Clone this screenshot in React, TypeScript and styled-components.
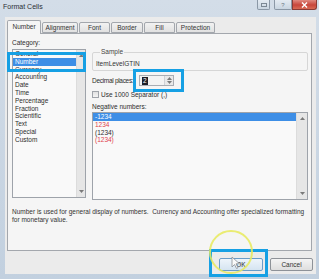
import React from 'react';
import styled, { createGlobalStyle } from 'styled-components';

const GlobalStyle = createGlobalStyle`
  html, body {
    margin: 0;
    padding: 0;
  }
  body {
    width: 319px;
    height: 279px;
    overflow: hidden;
    background: #c4d2e1;
    font-family: "Liberation Sans", Arial, sans-serif;
    color: #2d2d2d;
  }
`;

const categories = [
  'General',
  'Number',
  'Currency',
  'Accounting',
  'Date',
  'Time',
  'Percentage',
  'Fraction',
  'Scientific',
  'Text',
  'Special',
  'Custom',
];

const negatives = [
  { label: '-1234', red: false },
  { label: '1234', red: true },
  { label: '(1234)', red: false },
  { label: '(1234)', red: true },
];

const tabs = ['Number', 'Alignment', 'Font', 'Border', 'Fill', 'Protection'];
const tabWidths = [34, 36, 31, 32, 31, 39];

const Arrow = ({ up }: { up?: boolean }) => (
  <svg width="5" height="3" viewBox="0 0 5 3">
    <path d={up ? 'M0 3L2.5 0L5 3Z' : 'M0 0L2.5 3L5 0Z'} fill="#7a7a7a" />
  </svg>
);

const App = () => {
  return (
    <Window>
      <GlobalStyle />
      <TitleBar>
        <Title>Format Cells</Title>
        <Controls>
          <CtrlButton $w={13}>
            <svg width="6" height="4" viewBox="0 0 6 4">
              <rect x="0.5" y="0.5" width="5" height="3" fill="none" stroke="#7c8894" />
            </svg>
          </CtrlButton>
          <CtrlButton $w={18}>?</CtrlButton>
          <CloseButton>
            <svg width="7" height="6" viewBox="0 0 7 6">
              <path d="M1 0.5L6 5.5M6 0.5L1 5.5" stroke="#fff" strokeWidth="1.4" />
            </svg>
          </CloseButton>
        </Controls>
      </TitleBar>

      <Client>
        <TabStrip>
          {tabs.map((t, i) => (
            <Tab key={t} $active={i === 0} $w={tabWidths[i]}>
              {t}
            </Tab>
          ))}
        </TabStrip>

        <TabPanel>
          <Columns>
            <LeftCol>
              <Label>Category:</Label>
              <ListBox $h={149}>
                <ListItems>
                  {categories.map((c) => (
                    <Item key={c} $selected={c === 'Number'}>
                      {c}
                    </Item>
                  ))}
                </ListItems>
                <ScrollBar>
                  <ScrollArrow><Arrow up /></ScrollArrow>
                  <ScrollArrow><Arrow /></ScrollArrow>
                </ScrollBar>
              </ListBox>
            </LeftCol>

            <RightCol>
              <GroupBox>
                <Legend>Sample</Legend>
                <SampleText>ItemLevelGTIN</SampleText>
              </GroupBox>

              <DecimalRow>
                <DecimalLabel>Decimal places:</DecimalLabel>
                <Spinner>
                  <SpinValue>
                    <Selected>2</Selected>
                  </SpinValue>
                  <SpinButtons>
                    <SpinBtn><Arrow up /></SpinBtn>
                    <SpinBtn><Arrow /></SpinBtn>
                  </SpinButtons>
                </Spinner>
              </DecimalRow>

              <CheckRow>
                <CheckBox />
                <span>Use 1000 Separator (,)</span>
              </CheckRow>

              <NegLabel>Negative numbers:</NegLabel>
              <ListBox $h={88}>
                <ListItems>
                  {negatives.map((n, i) => (
                    <Item key={i} $selected={i === 0} $red={n.red}>
                      {n.label}
                    </Item>
                  ))}
                </ListItems>
                <ScrollBar $wide>
                  <ScrollArrow><Arrow up /></ScrollArrow>
                  <ScrollArrow><Arrow /></ScrollArrow>
                </ScrollBar>
              </ListBox>
            </RightCol>
          </Columns>

          <Description>
            Number is used for general display of numbers.&nbsp; Currency and Accounting offer specialized formatting
            <br />
            for monetary value.
          </Description>
        </TabPanel>

        <ButtonRow>
          <DialogButton $default>OK</DialogButton>
          <DialogButton>Cancel</DialogButton>
        </ButtonRow>
      </Client>

      <Highlight $x={7} $y={52} $w={79} $h={20} />
      <Highlight $x={133} $y={69} $w={51} $h={23} />
      <Highlight $x={209} $y={249} $w={59} $h={28} />

      <CursorLayer width="319" height="279" viewBox="0 0 319 279">
        <circle cx="231" cy="252" r="21" fill="none" stroke="#e8ea5a" strokeWidth="2" opacity="0.85" />
        <path
          d="M232 257L232 267L234.5 264.5L236.5 268.5L238 267.8L236 263.8L239.5 263.8Z"
          fill="#fafafa"
          stroke="#8a8f96"
          strokeWidth="0.8"
        />
      </CursorLayer>
    </Window>
  );
};

export default App;

const Window = styled.div`
  position: relative;
  width: 319px;
  height: 279px;
  display: flex;
  flex-direction: column;
  background: linear-gradient(#d3dde8, #c2d0df);
  overflow: hidden;
`;

const TitleBar = styled.div`
  height: 17px;
  display: flex;
  align-items: flex-start;
  padding: 0 2px 0 3px;
`;

const Title = styled.div`
  font-size: 7px;
  line-height: 14px;
  color: #2a2f36;
`;

const Controls = styled.div`
  margin-left: auto;
  display: flex;
  gap: 0;
`;

const CtrlButton = styled.div<{ $w: number }>`
  width: ${(p) => p.$w}px;
  height: 10px;
  margin-right: ${(p) => (p.$w === 13 ? 4 : 0)}px;
  box-sizing: border-box;
  border: 1px solid #8b98a6;
  border-top: none;
  border-radius: 0 0 2px 2px;
  background: linear-gradient(#e4ebf2, #c9d5e1);
  display: flex;
  align-items: center;
  justify-content: center;
  font-size: 6px;
  color: #6d7986;
`;

const CloseButton = styled.div`
  width: 25px;
  height: 10px;
  box-sizing: border-box;
  border: 1px solid #8b3b35;
  border-top: none;
  border-radius: 0 0 3px 0;
  background: linear-gradient(#e08a80, #c8463b 55%, #d86a55);
  display: flex;
  align-items: center;
  justify-content: center;
`;

const Client = styled.div`
  flex: 1;
  margin: 0 3px 5px 5px;
  background: #ebebeb;
  display: flex;
  flex-direction: column;
  padding-bottom: 3px;
`;

const TabStrip = styled.div`
  display: flex;
  align-items: flex-end;
  height: 13px;
  margin: 3px 0 0 2px;
  position: relative;
  z-index: 1;
`;

const Tab = styled.div<{ $active?: boolean; $w: number }>`
  width: ${(p) => p.$w}px;
  height: ${(p) => (p.$active ? 14 : 11)}px;
  margin-bottom: ${(p) => (p.$active ? -1 : 0)}px;
  margin-right: 1px;
  box-sizing: border-box;
  border: 1px solid #a3a7ad;
  border-bottom: ${(p) => (p.$active ? 'none' : '1px solid #a3a7ad')};
  border-radius: 2px 2px 0 0;
  background: ${(p) => (p.$active ? '#f5f5f5' : 'linear-gradient(#f2f2f2, #e1e1e1)')};
  font-size: 6.5px;
  line-height: ${(p) => (p.$active ? 12 : 9)}px;
  text-align: center;
  color: #333;
`;

const TabPanel = styled.div`
  height: 218px;
  box-sizing: border-box;
  margin: 0 4px 0 2px;
  border: 1px solid #a3a7ad;
  background: #f5f5f5;
  padding: 5px 3px 0 4px;
  display: flex;
  flex-direction: column;
`;

const Columns = styled.div`
  display: grid;
  grid-template-columns: 74px 1fr;
  column-gap: 6px;
`;

const LeftCol = styled.div`
  display: flex;
  flex-direction: column;
`;

const RightCol = styled.div`
  display: flex;
  flex-direction: column;
  padding-top: 9px;
`;

const Label = styled.div`
  font-size: 6.5px;
  line-height: 8px;
  margin-bottom: 2px;
`;

const ListBox = styled.div<{ $h: number }>`
  height: ${(p) => p.$h}px;
  box-sizing: border-box;
  border: 1px solid #9ea3aa;
  background: #f9f9f9;
  display: flex;
`;

const ListItems = styled.div`
  flex: 1;
  display: flex;
  flex-direction: column;
`;

const Item = styled.div<{ $selected?: boolean; $red?: boolean }>`
  font-size: 6.5px;
  line-height: 7.8px;
  height: 7.8px;
  padding-left: 2px;
  white-space: nowrap;
  background: ${(p) => (p.$selected ? '#3d8ee6' : 'transparent')};
  color: ${(p) => (p.$selected ? '#ffffff' : p.$red ? '#e0424c' : '#2d2d2d')};
`;

const ScrollBar = styled.div<{ $wide?: boolean }>`
  width: ${(p) => (p.$wide ? 10 : 8)}px;
  background: #e6e6e6;
  border-left: 1px solid #dcdcdc;
  display: flex;
  flex-direction: column;
  justify-content: space-between;
  padding: 3px 0;
`;

const ScrollArrow = styled.div`
  height: 5px;
  display: flex;
  align-items: center;
  justify-content: center;
`;

const GroupBox = styled.fieldset`
  margin: 0;
  padding: 4px 3px 2px 3px;
  border: 1px solid #d6d6d6;
  border-radius: 2px;
  min-width: 0;
`;

const Legend = styled.legend`
  font-size: 6.5px;
  line-height: 8px;
  padding: 0 1px;
  margin-left: 4px;
  color: #444;
`;

const SampleText = styled.div`
  font-size: 6.5px;
  line-height: 8px;
  color: #333;
`;

const DecimalRow = styled.div`
  display: flex;
  align-items: center;
  margin-top: 4px;
  height: 11px;
`;

const DecimalLabel = styled.div`
  width: 47px;
  font-size: 6.5px;
  line-height: 8px;
  letter-spacing: -0.3px;
  white-space: nowrap;
`;

const Spinner = styled.div`
  width: 35px;
  height: 11px;
  box-sizing: border-box;
  border: 1px solid #a9adb3;
  background: #f3f3f3;
  display: flex;
`;

const SpinValue = styled.div`
  flex: 1;
  display: flex;
  align-items: center;
  padding-left: 2px;
`;

const Selected = styled.span`
  background: #1e1e28;
  color: #fff;
  font-size: 6.5px;
  line-height: 8px;
  padding: 0 1px;
`;

const SpinButtons = styled.div`
  width: 8px;
  display: flex;
  flex-direction: column;
  border-left: 1px solid #cfd2d6;
`;

const SpinBtn = styled.div`
  flex: 1;
  display: flex;
  align-items: center;
  justify-content: center;
  background: #e9e9e9;
`;

const CheckRow = styled.div`
  display: flex;
  align-items: center;
  gap: 2px;
  margin-top: 4px;
  height: 8px;
  font-size: 6.5px;
`;

const CheckBox = styled.div`
  width: 7px;
  height: 7px;
  box-sizing: border-box;
  border: 1px solid #a0a4aa;
  background: linear-gradient(#e2e2e2, #f4f4f4);
`;

const NegLabel = styled.div`
  font-size: 6.5px;
  line-height: 8px;
  margin-top: 5px;
  margin-bottom: 1px;
`;

const Description = styled.div`
  margin-top: 8px;
  font-size: 6.5px;
  line-height: 8px;
  white-space: nowrap;
  color: #333;
`;

const ButtonRow = styled.div`
  display: flex;
  justify-content: flex-end;
  gap: 7px;
  margin-top: 7px;
  padding-right: 3px;
`;

const DialogButton = styled.div<{ $default?: boolean }>`
  width: ${(p) => (p.$default ? 44 : 43)}px;
  height: 13px;
  box-sizing: border-box;
  border: 1px solid ${(p) => (p.$default ? '#6a9cc8' : '#8e9298')};
  border-radius: 2px;
  background: ${(p) => (p.$default ? 'linear-gradient(#eef5fb, #d5e4f1)' : 'linear-gradient(#f4f4f4, #dedede)')};
  font-size: 6.5px;
  line-height: 11px;
  text-align: center;
  color: #333;
`;

const Highlight = styled.div<{ $x: number; $y: number; $w: number; $h: number }>`
  position: absolute;
  left: ${(p) => p.$x}px;
  top: ${(p) => p.$y}px;
  width: ${(p) => p.$w}px;
  height: ${(p) => p.$h}px;
  box-sizing: border-box;
  border: 3px solid #16a0e4;
  pointer-events: none;
`;

const CursorLayer = styled.svg`
  position: absolute;
  left: 0;
  top: 0;
  pointer-events: none;
`;
